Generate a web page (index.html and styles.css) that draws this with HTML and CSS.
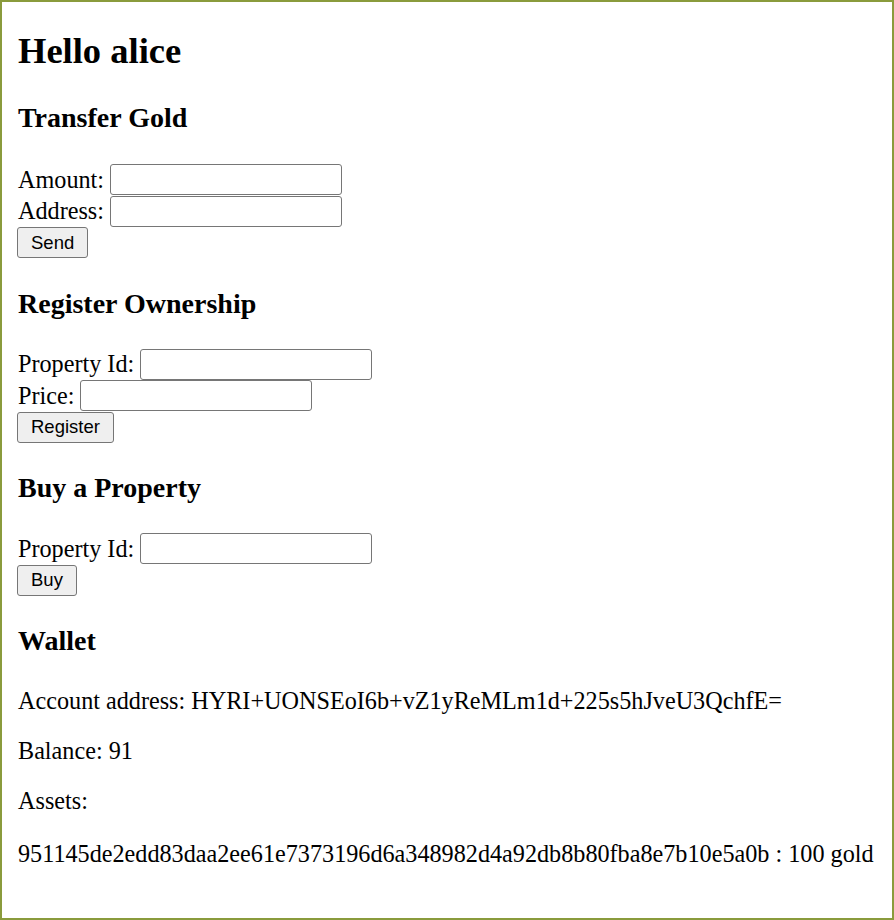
FILE: index.html
```html
<!DOCTYPE html>
<html>
<head>
<meta charset="utf-8">
<link rel="stylesheet" href="styles.css">
</head>
<body>
<div class="page">
  <h1 class="title">Hello alice</h1>

  <h3 class="section-title">Transfer Gold</h3>
  <form class="form">
    <div class="row"><label>Amount: <input class="field" type="text"></label></div>
    <div class="row"><label>Address: <input class="field" type="text"></label></div>
    <div class="row"><button class="btn" type="button">Send</button></div>
  </form>

  <h3 class="section-title">Register Ownership</h3>
  <form class="form">
    <div class="row"><label>Property Id: <input class="field" type="text"></label></div>
    <div class="row"><label>Price: <input class="field" type="text"></label></div>
    <div class="row"><button class="btn" type="button">Register</button></div>
  </form>

  <h3 class="section-title">Buy a Property</h3>
  <form class="form">
    <div class="row"><label>Property Id: <input class="field" type="text"></label></div>
    <div class="row"><button class="btn" type="button">Buy</button></div>
  </form>

  <h3 class="section-title">Wallet</h3>
  <div class="wallet">
    <p class="line">Account address: HYRI+UONSEoI6b+vZ1yReMLm1d+225s5hJveU3QchfE=</p>
    <p class="line">Balance: 91</p>
    <p class="line">Assets:</p>
    <p class="line hash">951145de2edd83daa2ee61e7373196d6a348982d4a92db8b80fba8e7b10e5a0b : 100 gold</p>
  </div>
</div>
</body>
</html>
```

FILE: styles.css
```css
html, body {
  margin: 0;
  padding: 0;
  background: #ffffff;
}

body {
  font-family: "Liberation Serif", "Times New Roman", serif;
  font-size: 24.2px;
  color: #000000;
}

.page {
  box-sizing: border-box;
  width: 894px;
  height: 920px;
  border: 2px solid #8a9b3c;
  padding: 0 16px;
}

.title {
  font-size: 36.5px;
  line-height: 37px;
  font-weight: bold;
  margin: 30px 0 0;
}

.section-title {
  font-size: 28px;
  line-height: 22px;
  font-weight: bold;
  margin: 34px 0 0;
}

.title + .section-title {
  margin-top: 38px;
}

.form {
  margin: 34px 0 0;
}

.title + .section-title + .form {
  margin-top: 35px;
}

.row {
  height: 31.5px;
  display: flex;
  align-items: center;
}

.row label {
  display: flex;
  align-items: center;
  white-space: pre;
}

.field {
  box-sizing: border-box;
  width: 232px;
  height: 31px;
  margin: 0;
  padding: 1px 4px;
  border: 1px solid #767676;
  border-radius: 3px;
  background: #ffffff;
  font-family: "Liberation Sans", Arial, sans-serif;
  font-size: 13px;
}

.btn {
  box-sizing: border-box;
  height: 31px;
  margin: 0 0 0 -1px;
  padding: 0 13px;
  border: 1px solid #767676;
  border-radius: 3px;
  background: #efefef;
  color: #000000;
  font-family: "Liberation Sans", Arial, sans-serif;
  font-size: 18.5px;
}

.wallet {
  margin-top: 35px;
}

.line {
  margin: 0 0 22px;
  line-height: 28px;
}

.hash {
  margin-top: 25px;
}
```
